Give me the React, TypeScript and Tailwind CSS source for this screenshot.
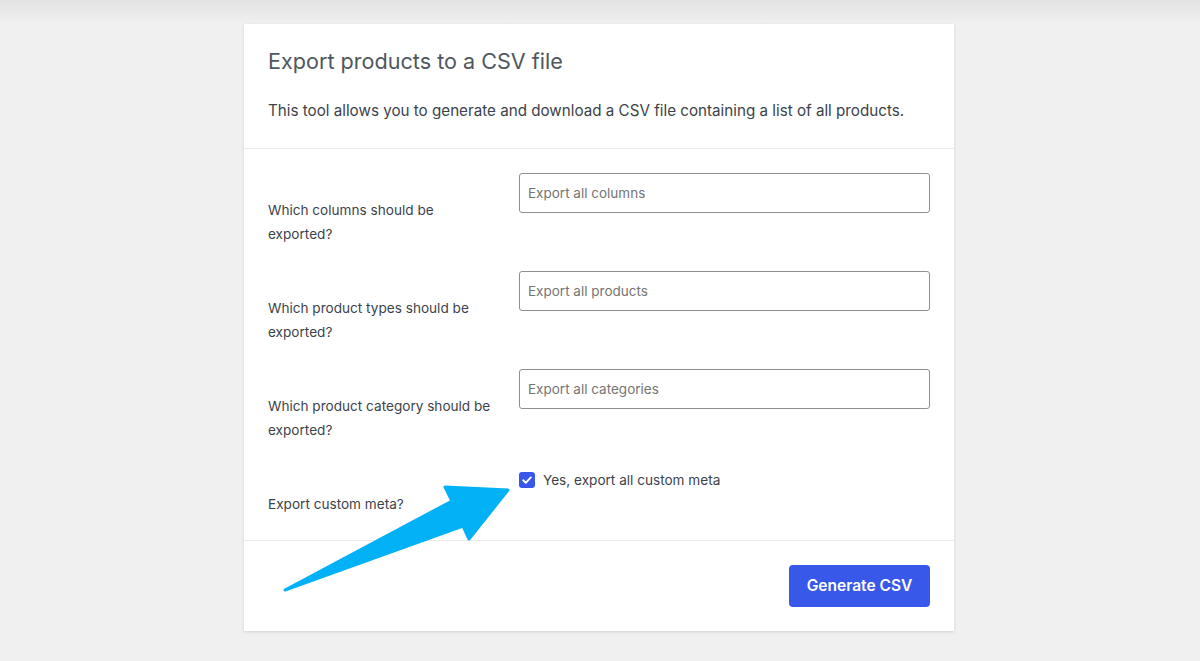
import React from 'react';

const rows = [
  { label: ['Which columns should be', 'exported?'], placeholder: 'Export all columns' },
  { label: ['Which product types should be', 'exported?'], placeholder: 'Export all products' },
  { label: ['Which product category should be', 'exported?'], placeholder: 'Export all categories' },
];

export default function App() {
  return (
    <div className="min-h-screen bg-[#f0f0f0] text-[#3c434a]" style={{ fontFamily: 'Inter, "Noto Sans", sans-serif' }}>
      {/* faint header shadow */}
      <div className="h-6 bg-gradient-to-b from-[#e3e3e3] to-[#f0f0f0]" />

      <div className="flex justify-center pr-[2px]">
        <div className="relative w-[710px] bg-white shadow-[0_1px_3px_rgba(0,0,0,0.12)]">
          {/* Header */}
          <div className="px-6 pt-[23px] pb-[25px] border-b border-[#ececec]">
            <h2 className="text-[21.6px] leading-[28px] text-[#50575e] font-normal">Export products to a CSV file</h2>
            <p className="mt-[24px] text-[15.2px] leading-[24px] text-[#3c434a] whitespace-nowrap">
              This tool allows you to generate and download a CSV file containing a list of all products.
            </p>
          </div>

          {/* Form rows */}
          <div className="px-6">
            {rows.map((r) => (
              <div key={r.placeholder} className="flex h-[98px]">
                <div className="w-[251px] pt-[49px] text-[13.6px] leading-[24px] text-[#3c434a]">
                  {r.label.map((l) => (
                    <div key={l}>{l}</div>
                  ))}
                </div>
                <div className="flex-1 pt-[24px]">
                  <div className="h-[40px] border border-[#8c8f94] rounded-[3px] px-[8px] flex items-center text-[13.5px] text-[#757575]">
                    {r.placeholder}
                  </div>
                </div>
              </div>
            ))}
            <div className="flex h-[97px]">
              <div className="w-[251px] pt-[49px] text-[13.6px] leading-[24px]">Export custom meta?</div>
              <div className="flex-1 pt-[29px] flex items-start gap-[8px]">
                <span className="w-[16px] h-[16px] rounded-[3px] bg-[#3858e9] flex items-center justify-center">
                  <svg width="12" height="12" viewBox="0 0 12 12" fill="none">
                    <path d="M2.2 6.3 L4.8 8.8 L9.8 3.4" stroke="white" strokeWidth="1.9" strokeLinecap="round" strokeLinejoin="round" />
                  </svg>
                </span>
                <span className="text-[13.6px] leading-[16px] text-[#3c434a]">Yes, export all custom meta</span>
              </div>
            </div>
          </div>

          {/* Footer */}
          <div className="border-t border-[#ececec] px-6 py-6 flex justify-end">
            <button className="h-[42px] w-[141px] rounded-[4px] bg-[#3858e9] text-white text-[15.5px] font-semibold">
              Generate CSV
            </button>
          </div>

          {/* Annotation arrow */}
          <svg className="absolute left-0 top-0 pointer-events-none" width="710" height="607" viewBox="244 24 710 607">
            <path
              d="M285 590 L452 501 L445 487 L508 490 L469 539 L463 526 Z"
              fill="#02b1f6"
              stroke="#02b1f6"
              strokeWidth="3"
              strokeLinejoin="round"
            />
          </svg>
        </div>
      </div>
    </div>
  );
}
